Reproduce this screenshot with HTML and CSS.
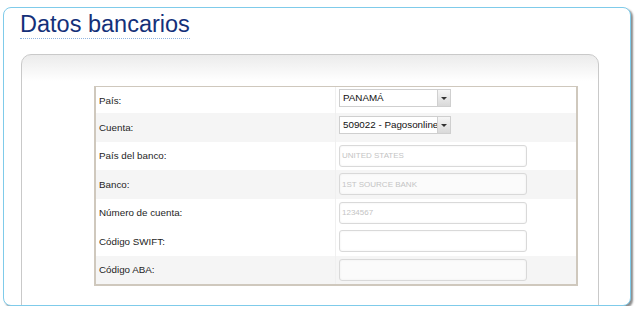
FILE: index.html
```html
<!DOCTYPE html>
<html lang="es">
<head>
<meta charset="utf-8">
<title>Datos bancarios</title>
<link rel="stylesheet" href="styles.css">
</head>
<body>
<div class="frame">
  <h1 class="title">Datos bancarios</h1>
  <div class="panel">
    <div class="form">
      <div class="row row-first">
        <div class="label">País:</div>
        <div class="field field-select">
          <div class="select"><span class="select-text">PANAMÁ</span><span class="select-btn"><span class="tri"></span></span></div>
        </div>
      </div>
      <div class="row alt">
        <div class="label">Cuenta:</div>
        <div class="field field-select">
          <div class="select"><span class="select-text">509022 - Pagosonline</span><span class="select-btn"><span class="tri"></span></span></div>
        </div>
      </div>
      <div class="row">
        <div class="label">País del banco:</div>
        <div class="field"><input class="input" type="text" readonly value="UNITED STATES"></div>
      </div>
      <div class="row alt">
        <div class="label">Banco:</div>
        <div class="field"><input class="input" type="text" readonly value="1ST SOURCE BANK"></div>
      </div>
      <div class="row">
        <div class="label">Número de cuenta:</div>
        <div class="field"><input class="input" type="text" readonly value="1234567"></div>
      </div>
      <div class="row">
        <div class="label">Código SWIFT:</div>
        <div class="field"><input class="input" type="text" value=""></div>
      </div>
      <div class="row alt">
        <div class="label">Código ABA:</div>
        <div class="field"><input class="input" type="text" value=""></div>
      </div>
    </div>
  </div>
</div>
</body>
</html>
```
FILE: styles.css
```css
html, body {
  margin: 0;
  padding: 0;
  background: #ffffff;
  font-family: "Liberation Sans", Arial, sans-serif;
}

.frame {
  margin: 7px 0 0 3px;
  width: 626px;
  height: 297px;
  border: 1px solid #7fcbea;
  border-radius: 8px;
  box-shadow: 2px 2px 2px rgba(0, 0, 0, 0.45);
  overflow: hidden;
  background: #fff;
}

.title {
  display: block;
  width: max-content;
  margin: 2px 0 0 16px;
  font-size: 23.5px;
  line-height: 28px;
  font-weight: normal;
  color: #143079;
  border-bottom: 1px dotted #8fb4e0;
}

.panel {
  margin: 15px 0 0 17px;
  width: 504px;
  height: 300px;
  padding: 31px 0 0 72px;
  border: 1px solid #c9c9c9;
  border-radius: 10px;
  background: linear-gradient(#ebebeb, #ffffff 26px);
}

.form {
  width: 480px;
  border: 2px solid #cfc8bd;
  border-top-width: 1px;
  background: #fff;
}

.row {
  display: grid;
  grid-template-columns: 239px 1fr;
  height: 28.5px;
  background: #ffffff;
}

.row-first {
  height: 26px;
}

.row.alt {
  background: #f5f5f5;
}

.label {
  display: flex;
  align-items: center;
  padding-left: 3px;
  font-size: 9.8px;
  color: #1e1e1e;
}

.field {
  display: flex;
  align-items: center;
  padding-left: 3px;
  border-left: 1px solid #f0f0f0;
}

.field-select {
  align-items: flex-start;
  padding-top: 2px;
}

.row.alt .field-select {
  padding-top: 3px;
}

.select {
  display: flex;
  width: 110px;
  height: 16px;
  border: 1px solid #cfcfcf;
  background: #fff;
  overflow: hidden;
}

.select-text {
  flex: 1;
  padding-left: 3px;
  font-size: 9.8px;
  line-height: 16px;
  color: #111;
  white-space: nowrap;
  overflow: hidden;
}

.select-btn {
  width: 12px;
  border-left: 1px solid #d0d0d0;
  background: linear-gradient(#f6f6f6, #d9d9d9);
  display: flex;
  align-items: center;
  justify-content: center;
}

.tri {
  width: 0;
  height: 0;
  border-left: 3px solid transparent;
  border-right: 3px solid transparent;
  border-top: 3px solid #333;
}

.input {
  box-sizing: border-box;
  width: 188px;
  height: 22px;
  margin: 0;
  padding: 0 0 0 2px;
  border: 1px solid #d9d9d9;
  border-radius: 3px;
  box-shadow: inset 0 0 2px #ececec;
  background: #fff;
  font-family: "Liberation Sans", Arial, sans-serif;
  font-size: 8px;
  color: #c4c4c4;
  outline: none;
}

.row.alt .input {
  background: #fbfbfb;
}
```
